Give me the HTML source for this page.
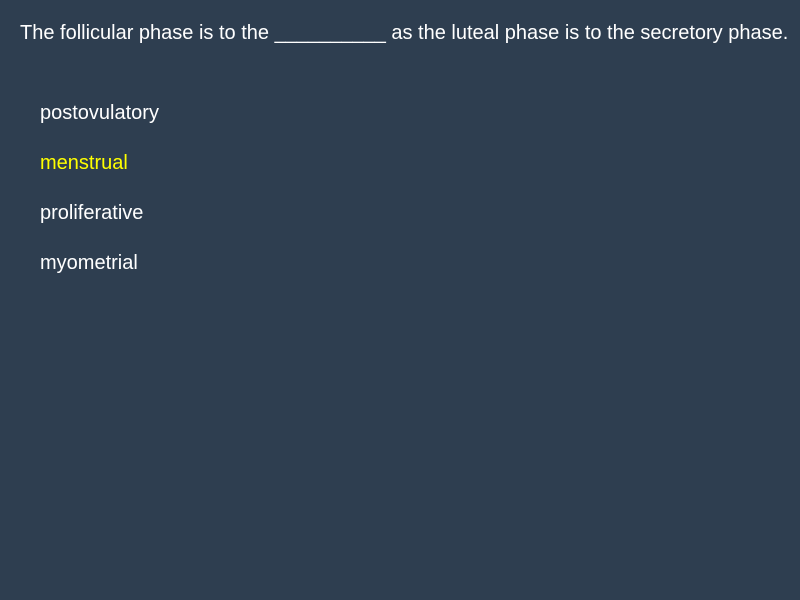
<!DOCTYPE html>
<html><head><style>
html,body{margin:0;padding:0;width:800px;height:600px;background:#2e3e50;overflow:hidden}
body{font-family:"Liberation Sans",sans-serif;color:#fff}
.q{position:absolute;left:20px;top:21px;font-size:20px;line-height:24px;white-space:nowrap}
.o{position:absolute;left:40px;font-size:20px;line-height:22px}
</style></head><body>
<div class="q">The follicular phase is to the __________ as the luteal phase is to the secretory phase.</div>
<div class="o" style="top:102px">postovulatory</div>
<div class="o" style="top:152px;color:#ffff00">menstrual</div>
<div class="o" style="top:202px">proliferative</div>
<div class="o" style="top:252px">myometrial</div>
</body></html>
